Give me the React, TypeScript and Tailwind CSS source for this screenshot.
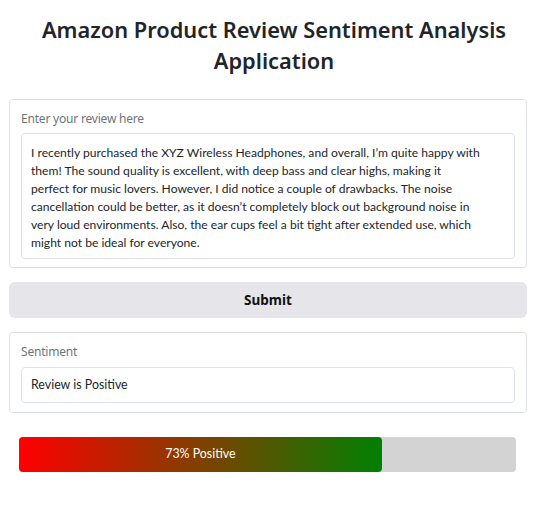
import React from "react";

// lines split as they wrap in the reference textarea
const reviewLines = [
  "I recently purchased the XYZ Wireless Headphones, and overall, I\u2019m quite happy with",
  "them! The sound quality is excellent, with deep bass and clear highs, making it",
  "perfect for music lovers. However, I did notice a couple of drawbacks. The noise",
  "cancellation could be better, as it doesn\u2019t completely block out background noise in",
  "very loud environments. Also, the ear cups feel a bit tight after extended use, which",
  "might not be ideal for everyone.",
];

export default function App() {
  const score = 73;
  return (
    <div className="min-h-[515px] bg-white px-[9px] pt-[14px] text-[#212529] font-['Noto_Sans',sans-serif]">
      <h1 className="text-center text-[21.8px] font-semibold leading-[31px] px-6">
        Amazon Product Review Sentiment Analysis Application
      </h1>

      <div className="mt-[23px] w-[518px] rounded border border-[#dee2e6] px-[11px] pt-[10px] pb-[8px]">
        <div className="text-[12px] text-[#6c757d] leading-[18px] tracking-[-0.2px]">Enter your review here</div>
        <div className="mt-[5px] rounded border border-[#dee2e6] px-[9px] pt-[10px] pb-[6px] text-[12.1px] leading-[18px] text-[#212529] font-['Lato',sans-serif]">
          {reviewLines.map((line) => (
            <div key={line} className="whitespace-nowrap">
              {line}
            </div>
          ))}
        </div>
      </div>

      <button className="mt-[14px] flex h-[36px] w-[518px] items-center justify-center rounded-md bg-[#e5e5ea] text-[13.5px] font-bold text-[#111]">
        Submit
      </button>

      <div className="mt-[14px] w-[518px] rounded border border-[#dee2e6] px-[11px] pt-[10px] pb-[9px]">
        <div className="text-[12px] text-[#6c757d] leading-[18px] tracking-[-0.2px]">Sentiment</div>
        <div className="mt-[6px] flex h-[36px] items-center rounded border border-[#dee2e6] px-[9px] text-[12.4px] font-['Lato',sans-serif]">
          Review is Positive
        </div>
      </div>

      <div className="mt-[24px] ml-[10px] h-[35px] w-[497px] rounded bg-[#d3d3d3]">
        <div
          className="flex h-full items-center justify-center rounded bg-[linear-gradient(to_right,#ff0000,#008000)] text-[12.4px] text-white font-['Lato',sans-serif]"
          style={{ width: `${score}%` }}
        >
          {score}% Positive
        </div>
      </div>
    </div>
  );
}
